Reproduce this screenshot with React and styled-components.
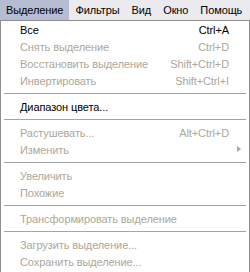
import React from 'react';
import styled, { createGlobalStyle } from 'styled-components';

const GlobalStyle = createGlobalStyle`
	html, body {
		margin: 0;
		padding: 0;
		background: #ffffff;
		overflow: hidden;
	}
	body {
		font-family: 'Liberation Sans', Arial, sans-serif;
		font-size: 11px;
		letter-spacing: -0.1px;
	}
`;

const Window = styled.div`
	width: 250px;
	height: 272px;
	display: flex;
	flex-direction: column;
	overflow: hidden;
`;

const MenuBar = styled.div`
	display: flex;
	height: 20px;
	background: #ebeaef;
	flex-shrink: 0;
`;

const BarItem = styled.div`
	display: flex;
	align-items: center;
	padding: 0 6px;
	height: 20px;
	color: #000000;
	background: ${(p) => (p.$active ? '#b6bdd2' : 'transparent')};
	white-space: nowrap;
`;

const Dropdown = styled.div`
	flex: 1;
	border: 1px solid #8f8f8f;
	border-bottom: none;
	background: #ffffff;
`;

const Row = styled.div`
	position: relative;
	display: flex;
	align-items: center;
	justify-content: space-between;
	height: 17px;
	padding: 0 20px 0 19px;
	color: ${(p) => (p.$disabled ? '#aca899' : '#000000')};
	white-space: nowrap;
`;

const Shortcut = styled.span`
	margin-left: 16px;
`;

const Arrow = styled.span`
	position: absolute;
	right: 8px;
	top: 5px;
	width: 0;
	height: 0;
	border-top: 3.5px solid transparent;
	border-bottom: 3.5px solid transparent;
	border-left: 4px solid #aca899;
`;

const Separator = styled.div`
	height: 1px;
	margin: 4px 3px;
	background: #a5a5a5;
`;

const menu = [
	{ label: 'Все', key: 'Ctrl+A' },
	{ label: 'Снять выделение', key: 'Ctrl+D', disabled: true },
	{ label: 'Восстановить выделение', key: 'Shift+Ctrl+D', disabled: true },
	{ label: 'Инвертировать', key: 'Shift+Ctrl+I', disabled: true },
	'sep',
	{ label: 'Диапазон цвета...' },
	'sep',
	{ label: 'Растушевать...', key: 'Alt+Ctrl+D', disabled: true },
	{ label: 'Изменить', sub: true, disabled: true },
	'sep',
	{ label: 'Увеличить', disabled: true },
	{ label: 'Похожие', disabled: true },
	'sep',
	{ label: 'Трансформировать выделение', disabled: true },
	'sep',
	{ label: 'Загрузить выделение...', disabled: true },
	{ label: 'Сохранить выделение...', disabled: true },
];

const bar = ['Выделение', 'Фильтры', 'Вид', 'Окно', 'Помощь'];

const App = () => {
	return (
		<Window>
			<GlobalStyle />
			<MenuBar>
				{bar.map((name, i) => (
					<BarItem key={name} $active={i === 0}>
						{name}
					</BarItem>
				))}
			</MenuBar>
			<Dropdown>
				{menu.map((item, i) =>
					item === 'sep' ? (
						<Separator key={i} />
					) : (
						<Row key={i} $disabled={item.disabled}>
							<span>{item.label}</span>
							{item.key && <Shortcut>{item.key}</Shortcut>}
							{item.sub && <Arrow />}
						</Row>
					)
				)}
			</Dropdown>
		</Window>
	);
};

export default App;
